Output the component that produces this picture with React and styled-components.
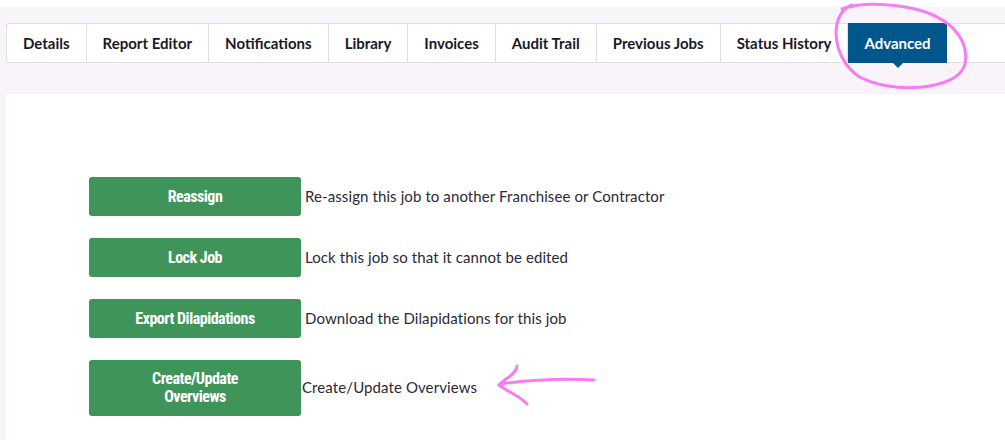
import React from "react";
import styled, { createGlobalStyle } from "styled-components";

const GlobalStyle = createGlobalStyle`
  html, body {
    margin: 0;
    padding: 0;
    background: #ffffff;
  }
  body {
    font-family: Lato, "Open Sans", sans-serif;
  }
`;

const tabs = [
  "Details",
  "Report Editor",
  "Notifications",
  "Library",
  "Invoices",
  "Audit Trail",
  "Previous Jobs",
  "Status History",
  "Advanced",
];

const actions = [
  { label: "Reassign", text: "Re-assign this job to another Franchisee or Contractor" },
  { label: "Lock Job", text: "Lock this job so that it cannot be edited" },
  { label: "Export Dilapidations", text: "Download the Dilapidations for this job" },
  { label: "Create/Update Overviews", text: "Create/Update Overviews", tall: true },
];

const App = () => {
  return (
    <Page>
      <GlobalStyle />
      <Shell>
        <TabBar>
          {tabs.map((tab) => (
            <Tab key={tab} active={tab === "Advanced"}>
              {tab}
            </Tab>
          ))}
        </TabBar>
        <Panel>
          {actions.map((action) => (
            <ActionRow key={action.label}>
              <ActionButton tall={action.tall}>
                {action.tall ? (
                  <>
                    Create/Update
                    <br />
                    Overviews
                  </>
                ) : (
                  action.label
                )}
              </ActionButton>
              <Description tight={action.tall}>{action.text}</Description>
            </ActionRow>
          ))}
        </Panel>
      </Shell>
      <Scribble width="1005" height="440" viewBox="0 0 1005 440">
        <path
          d="M 852 5 C 828 14, 832 58, 858 76 C 888 94, 958 92, 965 64 C 970 38, 948 14, 905 7 C 880 3, 858 3, 842 9"
          fill="none"
          stroke="#f77cf3"
          strokeWidth="3"
          strokeLinecap="round"
        />
        <path
          d="M 594 380 C 560 378, 530 380, 500 384 M 517 366 C 517 374, 505 378, 499 385 C 508 392, 520 396, 527 404"
          fill="none"
          stroke="#f77cf3"
          strokeWidth="3"
          strokeLinecap="round"
        />
      </Scribble>
    </Page>
  );
};
export default App;

const Page = styled.div`
  position: relative;
  padding-top: 7px;
  height: 433px;
  overflow: hidden;
`;

const Shell = styled.div`
  background: #f8f4f9;
  padding: 16px 0 0 6px;
  height: 100%;
  box-sizing: border-box;
`;

const TabBar = styled.div`
  display: flex;
  height: 40px;
  box-sizing: border-box;
  background: #ffffff;
  border: 1px solid #e1dee4;
  border-right: none;
  border-radius: 4px 0 0 4px;
`;

const Tab = styled.div`
  position: relative;
  display: flex;
  align-items: center;
  padding: 0 16px;
  font-family: Lato, sans-serif;
  font-weight: 700;
  font-size: 15px;
  letter-spacing: 0;
  color: ${({ active }) => (active ? "#ffffff" : "#1b1926")};
  background: ${({ active }) => (active ? "#01568b" : "transparent")};
  border-right: ${({ active }) => (active ? "none" : "1px solid #e1dee4")};
  margin: ${({ active }) => (active ? "-1px 0" : "0")};

  &:first-child {
    border-radius: 4px 0 0 4px;
  }

  &::after {
    content: "";
    display: ${({ active }) => (active ? "block" : "none")};
    position: absolute;
    left: 50%;
    bottom: -5px;
    transform: translateX(-50%);
    border-left: 5px solid transparent;
    border-right: 5px solid transparent;
    border-top: 5px solid #01568b;
  }
`;

const Panel = styled.div`
  margin-top: 31px;
  background: #ffffff;
  height: 100%;
  padding: 83px 0 0 83px;
  display: flex;
  flex-direction: column;
  gap: 22px;
`;

const ActionRow = styled.div`
  display: flex;
  align-items: center;
`;

const ActionButton = styled.div`
  width: 212px;
  height: ${({ tall }) => (tall ? "56px" : "39px")};
  box-sizing: border-box;
  display: flex;
  align-items: center;
  justify-content: center;
  text-align: center;
  background: #3f9459;
  border-radius: 3px;
  color: #ffffff;
  font-family: "Roboto Condensed", "DejaVu Sans Condensed", "DejaVu Sans", sans-serif;
  font-stretch: condensed;
  font-weight: 700;
  font-size: 16px;
  letter-spacing: -0.5px;
  line-height: 18px;
`;

const Description = styled.div`
  margin-left: ${({ tight }) => (tight ? "1px" : "4px")};
  margin-top: -2px;
  font-family: Lato, sans-serif;
  font-size: 15px;
  letter-spacing: 0.1px;
  color: #2b2937;
`;

const Scribble = styled.svg`
  position: absolute;
  left: 0;
  top: 0;
  pointer-events: none;
`;
